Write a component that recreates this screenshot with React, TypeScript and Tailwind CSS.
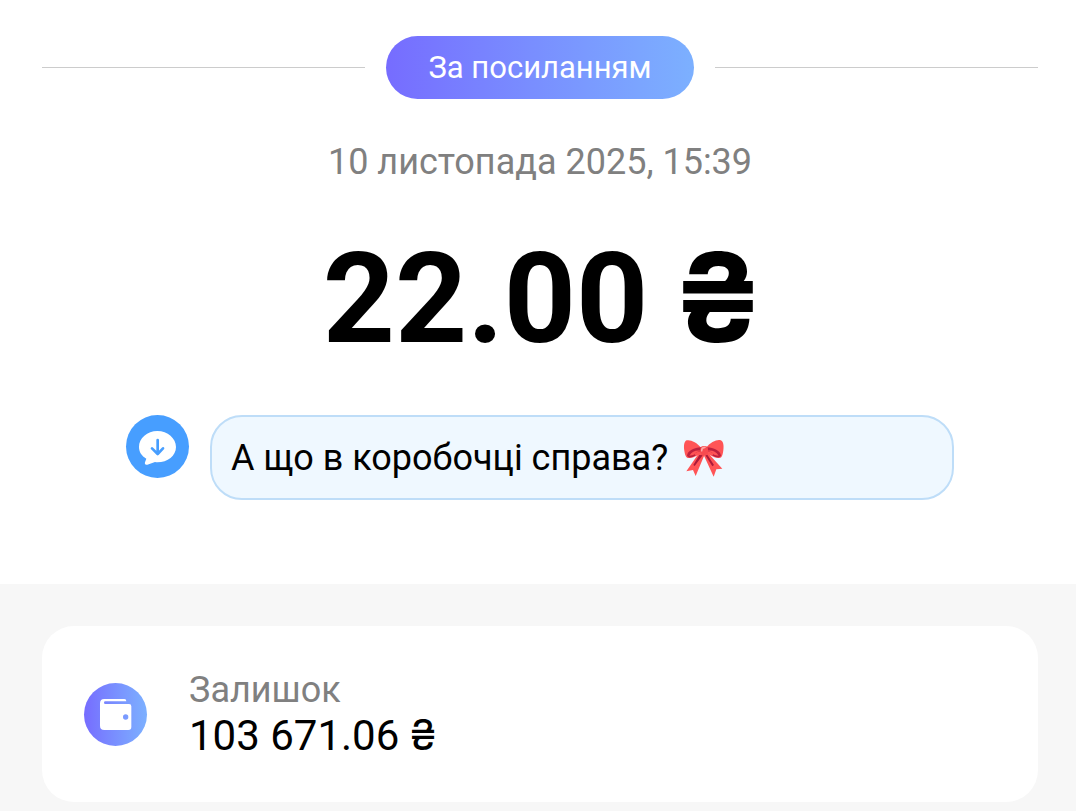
import React from 'react';

function MessageIcon() {
  return (
    <svg viewBox="0 0 189 189" className="w-full h-full" aria-hidden="true">
      <path
        d="M94 48C64 48 39 69 39 96c0 15 8 27 22 35l-4 11c-2 6 2 9 7 7l23-8c3 1 5 1 7 1 31 0 56-20 56-46S125 48 94 48Z"
        fill="white"
      />
      <path
        d="M95 75v41M78 100l17 17 16-17"
        fill="none"
        stroke="#479EFF"
        strokeWidth="8"
        strokeLinecap="round"
        strokeLinejoin="round"
      />
    </svg>
  );
}

function WalletIcon() {
  return (
    <svg viewBox="0 0 189 189" className="w-full h-full" aria-hidden="true">
      <path
        fillRule="evenodd"
        clipRule="evenodd"
        d="M61 48h60q6 0 6 7H64a4 4 0 0 0 0 8h71q7 0 7 7v62q0 9-9 9H61q-13 0-13-13V61q0-13 13-13Zm64 46a8 8 0 1 0 0 16 8 8 0 0 0 0-16Z"
        fill="white"
      />
    </svg>
  );
}

function BowIcon() {
  return (
    <svg viewBox="39 21 126 126" className="w-[42px] h-[42px] shrink-0" role="img" aria-label="🎀">
      {/* Tails */}
      <path d="M87 69 49 124l20-4 8 18 26-62Z" fill="#FF5456" />
      <path d="M114 69 157 116l-18 2-8 22-29-63Z" fill="#FF5456" />
      <path d="M88 75 70 105l4 3 24-32ZM112 74l20 31-5 4-21-33Z" fill="#AB1A3A" />
      {/* Loops */}
      <path d="M94 54C80 36 61 28 50 31c-8 3-9 17-7 31 2 13 5 22 13 22 16 1 28-10 41-14Z" fill="#FF5456" />
      <path d="M108 54c13-18 35-27 44-23 8 3 10 16 8 30-2 14-4 23-12 23-16 1-28-10-42-14Z" fill="#FF5456" />
      <path d="M51 77c1-14 22-25 42-25v12C76 66 67 73 78 76c-10 6-21 10-27 1Z" fill="#BD203D" />
      <path d="M153 77c-1-14-22-25-42-25v12c17 2 26 9 15 12 10 6 21 10 27 1Z" fill="#BD203D" />
      <path d="M58 77c9-13 18-17 34-15-15 3-16 9-22 13ZM146 77c-9-13-18-17-34-15 15 3 16 9 22 13Z" fill="#FF5456" />
      {/* Knot */}
      <rect x="91" y="48" width="23" height="29" rx="10" fill="#F74B50" />
      <path d="M95 62c0-7 3-10 10-10" fill="none" stroke="#FFA6A3" strokeWidth="5" strokeLinecap="round" />
    </svg>
  );
}

export default function App() {
  return (
    <main className="min-h-screen flex flex-col bg-white text-black font-[Roboto,Inter,sans-serif]">
      <section className="flex flex-col items-center pt-9 pb-[84px] pl-[42px] pr-[38px]">
        {/* Link badge with rules */}
        <div className="w-full flex items-center gap-[21px]">
          <div className="flex-1 h-px bg-[#CCCCCC]" />
          <span className="h-[63px] px-[42px] flex items-center rounded-full bg-linear-to-r from-[#766CFF] to-[#7CB0FF] text-white text-[31px] leading-[44px] whitespace-nowrap">
            За посиланням
          </span>
          <div className="flex-1 h-px bg-[#CCCCCC]" />
        </div>

        <time dateTime="2025-11-10T15:39" className="mt-[41px] text-[36px] leading-[44px] text-[#808080]">
          10 листопада 2025, 15:39
        </time>

        <h1 className="mt-[52px] pl-[6px] h-[126px] flex items-baseline gap-6 text-[126px] leading-[126px] font-bold whitespace-nowrap">
          <span>22.00</span>
          <span className="text-[123px]">₴</span>
        </h1>

        {/* Comment */}
        <div className="mt-[53px] w-full px-[84px] flex items-start gap-[21px]">
          <div className="w-[63px] h-[63px] shrink-0 rounded-full bg-[#479EFF]">
            <MessageIcon />
          </div>
          <p className="flex-1 min-h-[85px] px-[19px] flex items-center gap-[15px] rounded-[32px] border-2 border-[#BEDDF8] bg-[#EFF8FF] text-[36px] leading-[44px]">
            <span>А що в коробочці справа?</span>
            <BowIcon />
          </p>
        </div>
      </section>

      {/* Balance */}
      <section className="flex-1 bg-[#F7F7F7] pt-[42px] pb-2 pl-[42px] pr-[38px]">
        <div className="flex items-center gap-[42px] p-[42px] rounded-[32px] bg-white">
          <div className="w-[63px] h-[63px] shrink-0 rounded-full bg-linear-to-r from-[#766CFF] to-[#7CB0FF]">
            <WalletIcon />
          </div>
          <div>
            <p className="text-[36px] leading-[44px] text-[#808080]">Залишок</p>
            <p className="text-[42px] leading-[48px]">103 671.06 ₴</p>
          </div>
        </div>
      </section>
    </main>
  );
}
